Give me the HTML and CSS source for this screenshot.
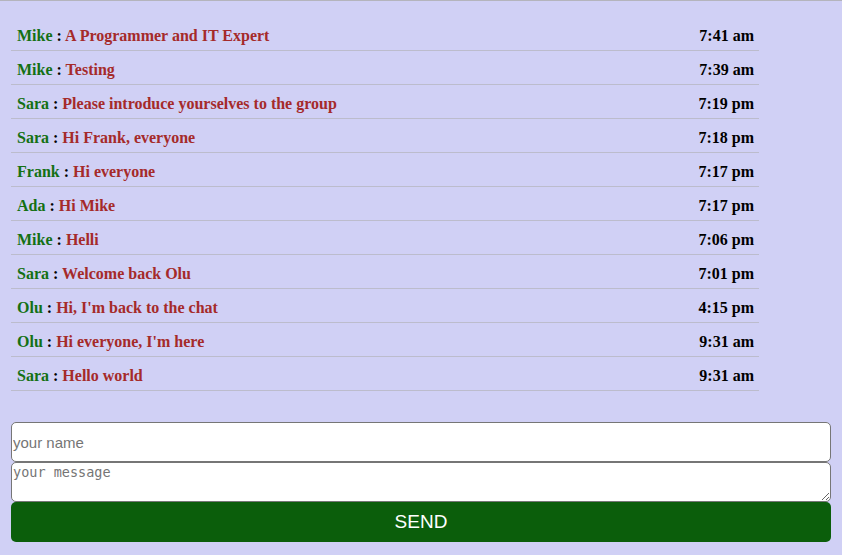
FILE: index.html
```html
<!DOCTYPE html>
<html>
<head>
<meta charset="utf-8">
<link rel="stylesheet" href="styles.css">
</head>
<body>
<div class="page">
  <div class="messages">
    <div class="row"><span class="msg"><span class="name">Mike</span> : <span class="text">A Programmer and IT Expert</span></span><span class="time">7:41 am</span></div>
    <div class="row"><span class="msg"><span class="name">Mike</span> : <span class="text">Testing</span></span><span class="time">7:39 am</span></div>
    <div class="row"><span class="msg"><span class="name">Sara</span> : <span class="text">Please introduce yourselves to the group</span></span><span class="time">7:19 pm</span></div>
    <div class="row"><span class="msg"><span class="name">Sara</span> : <span class="text">Hi Frank, everyone</span></span><span class="time">7:18 pm</span></div>
    <div class="row"><span class="msg"><span class="name">Frank</span> : <span class="text">Hi everyone</span></span><span class="time">7:17 pm</span></div>
    <div class="row"><span class="msg"><span class="name">Ada</span> : <span class="text">Hi Mike</span></span><span class="time">7:17 pm</span></div>
    <div class="row"><span class="msg"><span class="name">Mike</span> : <span class="text">Helli</span></span><span class="time">7:06 pm</span></div>
    <div class="row"><span class="msg"><span class="name">Sara</span> : <span class="text">Welcome back Olu</span></span><span class="time">7:01 pm</span></div>
    <div class="row"><span class="msg"><span class="name">Olu</span> : <span class="text">Hi, I'm back to the chat</span></span><span class="time">4:15 pm</span></div>
    <div class="row"><span class="msg"><span class="name">Olu</span> : <span class="text">Hi everyone, I'm here</span></span><span class="time">9:31 am</span></div>
    <div class="row"><span class="msg"><span class="name">Sara</span> : <span class="text">Hello world</span></span><span class="time">9:31 am</span></div>
  </div>
  <form class="form">
    <input class="field" type="text" placeholder="your name">
    <textarea class="area" placeholder="your message"></textarea>
    <button class="send" type="button">SEND</button>
  </form>
</div>
</body>
</html>
```

FILE: styles.css
```css
html, body {
  margin: 0;
  padding: 0;
  background: #d0d0f5;
}
body {
  border-top: 1px solid #b4b4bc;
  font-family: "Liberation Serif", "Times New Roman", serif;
}
.page {
  padding: 16px 11px 0 11px;
}
.messages {
  width: 748px;
  display: flex;
  flex-direction: column;
}
.row {
  box-sizing: border-box;
  height: 34px;
  border-bottom: 1px solid #bcbccc;
  display: flex;
  align-items: center;
  justify-content: space-between;
  padding: 4px 5px 0 6px;
  font-weight: bold;
  font-size: 16px;
  color: #000;
}
.name { color: #147014; }
.text { color: #a52a2a; }
.form {
  margin-top: 31px;
  width: 820px;
  display: flex;
  flex-direction: column;
}
.field, .area {
  box-sizing: border-box;
  width: 100%;
  height: 40px;
  margin: 0;
  border: 1px solid #767676;
  border-radius: 5px;
  background: #fff;
  padding: 0 1px;
}
.field {
  font-family: "Liberation Sans", Arial, sans-serif;
  font-size: 15px;
}
.field::placeholder { color: #757575; }
.area {
  font-family: "DejaVu Sans Mono", "Liberation Mono", monospace;
  font-size: 13.5px;
  padding-top: 1px;
  resize: vertical;
}
.area::placeholder { color: #757575; }
.send {
  height: 40px;
  margin: 0;
  border: none;
  border-radius: 5px;
  background: #0b5e0b;
  color: #fff;
  font-family: "Liberation Sans", Arial, sans-serif;
  font-size: 19px;
}
```
